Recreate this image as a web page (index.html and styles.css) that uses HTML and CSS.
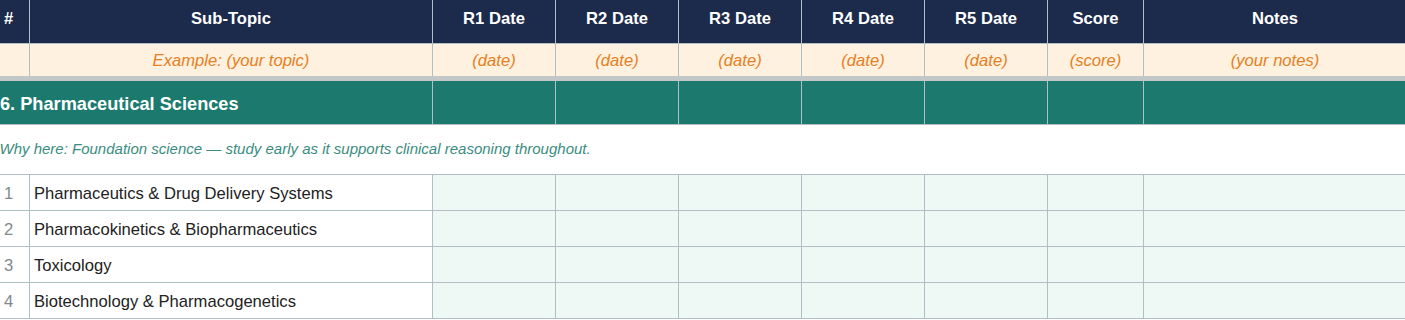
FILE: index.html
```html
<!DOCTYPE html>
<html>
<head>
<meta charset="utf-8">
<link rel="stylesheet" href="styles.css">
</head>
<body>
<div class="scroller">
<table class="tracker">
  <colgroup>
    <col class="c-num">
    <col class="c-topic">
    <col class="c-date">
    <col class="c-date">
    <col class="c-date">
    <col class="c-date">
    <col class="c-date">
    <col class="c-score">
    <col class="c-notes">
  </colgroup>
  <thead>
    <tr class="head">
      <th>#</th>
      <th>Sub-Topic</th>
      <th>R1 Date</th>
      <th>R2 Date</th>
      <th>R3 Date</th>
      <th>R4 Date</th>
      <th>R5 Date</th>
      <th>Score</th>
      <th>Notes</th>
    </tr>
  </thead>
  <tbody>
    <tr class="example">
      <td></td>
      <td>Example: (your topic)</td>
      <td>(date)</td>
      <td>(date)</td>
      <td>(date)</td>
      <td>(date)</td>
      <td>(date)</td>
      <td>(score)</td>
      <td>(your notes)</td>
    </tr>
    <tr class="section">
      <td colspan="2" class="section-title">6. Pharmaceutical Sciences</td>
      <td></td><td></td><td></td><td></td><td></td><td></td><td></td>
    </tr>
    <tr class="why">
      <td colspan="9">Why here: Foundation science — study early as it supports clinical reasoning throughout.</td>
    </tr>
    <tr class="item">
      <td class="num">1</td>
      <td class="topic">Pharmaceutics &amp; Drug Delivery Systems</td>
      <td></td><td></td><td></td><td></td><td></td><td></td><td></td>
    </tr>
    <tr class="item">
      <td class="num">2</td>
      <td class="topic">Pharmacokinetics &amp; Biopharmaceutics</td>
      <td></td><td></td><td></td><td></td><td></td><td></td><td></td>
    </tr>
    <tr class="item">
      <td class="num">3</td>
      <td class="topic">Toxicology</td>
      <td></td><td></td><td></td><td></td><td></td><td></td><td></td>
    </tr>
    <tr class="item">
      <td class="num">4</td>
      <td class="topic">Biotechnology &amp; Pharmacogenetics</td>
      <td></td><td></td><td></td><td></td><td></td><td></td><td></td>
    </tr>
  </tbody>
</table>
</div>
</body>
</html>
```

FILE: styles.css
```css
html, body {
  margin: 0;
  padding: 0;
  background: #ffffff;
  overflow: hidden;
}

.scroller {
  width: 1405px;
  overflow: hidden;
}

.tracker {
  border-collapse: collapse;
  table-layout: fixed;
  width: 1420px;
  margin-left: -13px;
  font-family: "Liberation Sans", Arial, sans-serif;
  font-size: 16.6px;
}

.c-num { width: 42px; }
.c-topic { width: 403px; }
.c-date { width: 123px; }
.c-score { width: 96px; }
.c-notes { width: 263px; }

.tracker th,
.tracker td {
  border: 1px solid #b0bec5;
  padding: 0;
}

.head th {
  background: #1c2a4b;
  color: #ffffff;
  font-weight: bold;
  height: 37px;
  padding-bottom: 6px;
  border-top: none;
  text-align: center;
}

.example td {
  background: #fff1df;
  color: #e67e22;
  font-style: italic;
  text-align: center;
  height: 30px;
  padding-top: 2px;
  border-bottom: 5px solid #c3c7c8;
}

.section td {
  background: #1b7a6d;
  height: 39px;
  padding-top: 4px;
}

.section .section-title {
  color: #ffffff;
  font-weight: bold;
  font-size: 18.2px;
  padding-left: 12px;
  text-align: left;
}

.why td {
  background: #ffffff;
  color: #3a8c80;
  font-style: italic;
  font-size: 15px;
  height: 47px;
  padding-bottom: 2px;
  padding-left: 12px;
  border-left: none;
  border-right: none;
}

.item td {
  background: #eef8f5;
  height: 33px;
  padding-top: 2px;
}

.item td.num {
  background: #ffffff;
  color: #808a8c;
  text-align: center;
}

.item td.topic {
  background: #ffffff;
  color: #222222;
  padding-left: 4px;
}
```
